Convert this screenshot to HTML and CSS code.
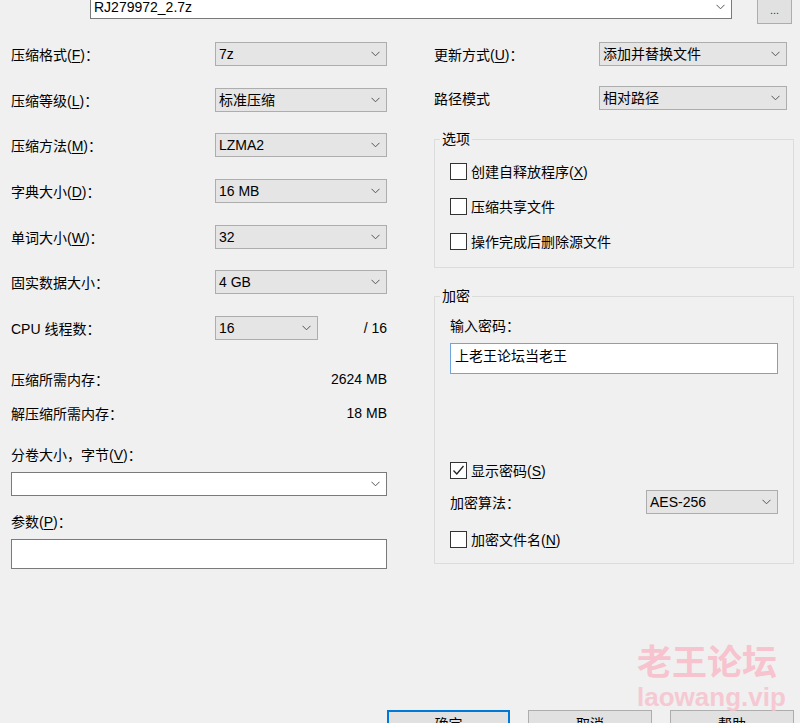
FILE: index.html
```html
<!DOCTYPE html>
<html lang="zh-CN">
<head>
<meta charset="utf-8">
<title>添加到压缩包</title>
<link rel="stylesheet" href="styles.css">
</head>
<body>
<div class="dialog">
  <div class="archive-row">
    <div class="combo combo-edit archive"><span class="combo-text">RJ279972_2.7z</span><svg class="chev" width="9" height="6" viewBox="0 0 9 6"><polyline points="0.5,0.8 4.5,4.8 8.5,0.8" fill="none" stroke="#555" stroke-width="1"/></svg></div>
    <button class="btn browse">...</button>
  </div>

  <div class="main">
    <div class="left">
      <div class="rows">
        <div class="field"><span class="label">压缩格式(<u>F</u>)：</span><div class="combo w172"><span class="combo-text">7z</span><svg class="chev" width="9" height="6" viewBox="0 0 9 6"><polyline points="0.5,0.8 4.5,4.8 8.5,0.8" fill="none" stroke="#555" stroke-width="1"/></svg></div></div>
        <div class="field"><span class="label">压缩等级(<u>L</u>)：</span><div class="combo w172"><span class="combo-text">标准压缩</span><svg class="chev" width="9" height="6" viewBox="0 0 9 6"><polyline points="0.5,0.8 4.5,4.8 8.5,0.8" fill="none" stroke="#555" stroke-width="1"/></svg></div></div>
        <div class="field"><span class="label">压缩方法(<u>M</u>)：</span><div class="combo w172"><span class="combo-text">LZMA2</span><svg class="chev" width="9" height="6" viewBox="0 0 9 6"><polyline points="0.5,0.8 4.5,4.8 8.5,0.8" fill="none" stroke="#555" stroke-width="1"/></svg></div></div>
        <div class="field"><span class="label">字典大小(<u>D</u>)：</span><div class="combo w172"><span class="combo-text">16 MB</span><svg class="chev" width="9" height="6" viewBox="0 0 9 6"><polyline points="0.5,0.8 4.5,4.8 8.5,0.8" fill="none" stroke="#555" stroke-width="1"/></svg></div></div>
        <div class="field"><span class="label">单词大小(<u>W</u>)：</span><div class="combo w172"><span class="combo-text">32</span><svg class="chev" width="9" height="6" viewBox="0 0 9 6"><polyline points="0.5,0.8 4.5,4.8 8.5,0.8" fill="none" stroke="#555" stroke-width="1"/></svg></div></div>
        <div class="field"><span class="label">固实数据大小：</span><div class="combo w172"><span class="combo-text">4 GB</span><svg class="chev" width="9" height="6" viewBox="0 0 9 6"><polyline points="0.5,0.8 4.5,4.8 8.5,0.8" fill="none" stroke="#555" stroke-width="1"/></svg></div></div>
        <div class="field"><span class="label">CPU 线程数：</span><div class="combo w103"><span class="combo-text">16</span><svg class="chev" width="9" height="6" viewBox="0 0 9 6"><polyline points="0.5,0.8 4.5,4.8 8.5,0.8" fill="none" stroke="#555" stroke-width="1"/></svg></div><span class="value">/ 16</span></div>
      </div>
      <div class="mem">
        <div class="field"><span class="label">压缩所需内存：</span><span class="value">2624 MB</span></div>
        <div class="field"><span class="label">解压缩所需内存：</span><span class="value">18 MB</span></div>
      </div>
      <div class="stack">
        <div class="line">分卷大小，字节(<u>V</u>)：</div>
        <div class="combo combo-edit full"><span class="combo-text"></span><svg class="chev" width="9" height="6" viewBox="0 0 9 6"><polyline points="0.5,0.8 4.5,4.8 8.5,0.8" fill="none" stroke="#555" stroke-width="1"/></svg></div>
        <div class="line params-label">参数(<u>P</u>)：</div>
        <div class="textbox params"></div>
      </div>
    </div>

    <div class="right">
      <div class="rows right-rows">
        <div class="field"><span class="label rlabel">更新方式(<u>U</u>)：</span><div class="combo w188"><span class="combo-text">添加并替换文件</span><svg class="chev" width="9" height="6" viewBox="0 0 9 6"><polyline points="0.5,0.8 4.5,4.8 8.5,0.8" fill="none" stroke="#555" stroke-width="1"/></svg></div></div>
        <div class="field"><span class="label rlabel">路径模式</span><div class="combo w188"><span class="combo-text">相对路径</span><svg class="chev" width="9" height="6" viewBox="0 0 9 6"><polyline points="0.5,0.8 4.5,4.8 8.5,0.8" fill="none" stroke="#555" stroke-width="1"/></svg></div></div>
      </div>

      <fieldset class="group options">
        <legend>选项</legend>
        <label class="check"><span class="box"></span><span>创建自释放程序(<u>X</u>)</span></label>
        <label class="check"><span class="box"></span><span>压缩共享文件</span></label>
        <label class="check"><span class="box"></span><span>操作完成后删除源文件</span></label>
      </fieldset>

      <fieldset class="group encrypt">
        <legend>加密</legend>
        <div class="line">输入密码：</div>
        <div class="textbox password">上老王论坛当老王</div>
        <label class="check show-pw"><span class="box"><svg width="15" height="15" viewBox="0 0 15 15"><polyline points="2.5,7.5 5.8,11 12.5,3" fill="none" stroke="#222" stroke-width="1.3"/></svg></span><span>显示密码(<u>S</u>)</span></label>
        <div class="field algo"><span class="label">加密算法：</span><div class="combo w133"><span class="combo-text">AES-256</span><svg class="chev" width="9" height="6" viewBox="0 0 9 6"><polyline points="0.5,0.8 4.5,4.8 8.5,0.8" fill="none" stroke="#555" stroke-width="1"/></svg></div></div>
        <label class="check enc-names"><span class="box"></span><span>加密文件名(<u>N</u>)</span></label>
      </fieldset>
    </div>
  </div>

  <div class="buttons">
    <button class="btn action default">确定</button>
    <button class="btn action">取消</button>
    <button class="btn action">帮助</button>
  </div>

  <div class="watermark">
    <div class="wm-cn">老王论坛</div>
    <div class="wm-en">laowang.vip</div>
  </div>
</div>
</body>
</html>
```

FILE: styles.css
```css
html, body {
  margin: 0;
  padding: 0;
}
body {
  width: 800px;
  height: 723px;
  overflow: hidden;
  background: #f0f0f0;
  font-family: "Liberation Sans", "Noto Sans CJK SC", sans-serif;
  font-size: 14px;
  color: #000;
}
.dialog {
  position: relative;
  width: 800px;
  height: 723px;
}
u {
  text-decoration: underline;
  text-underline-offset: 2px;
}

/* combos */
.combo {
  box-sizing: border-box;
  height: 24px;
  display: flex;
  align-items: center;
  background: #e5e5e5;
  border: 1px solid #adadad;
  padding: 0 6px 0 3px;
}
.combo-text {
  flex: 1;
  white-space: nowrap;
  line-height: 20px;
}
.chev {
  flex: none;
}
.combo-edit {
  background: #fff;
  border-color: #7a7a7a;
}
.w172 { width: 172px; }
.w103 { width: 103px; }
.w188 { width: 188px; }
.w133 { width: 133px; }

.textbox {
  box-sizing: border-box;
  background: #fff;
  border: 1px solid #7a7a7a;
}

/* top row */
.archive-row {
  display: flex;
  align-items: flex-start;
  margin-top: -6px;
  padding-left: 90px;
  gap: 25px;
}
.archive {
  width: 642px;
  margin-top: 1px;
}
.btn {
  box-sizing: border-box;
  font-family: inherit;
  font-size: 14px;
  color: #000;
  background: #e1e1e1;
  border: 1px solid #adadad;
  padding: 0;
  margin: 0;
}
.browse {
  width: 35px;
  height: 30px;
  font-size: 11px;
  line-height: 30px;
  color: #333;
}

/* main */
.main {
  display: grid;
  grid-template-columns: 376px 360px;
  column-gap: 47px;
  padding-left: 11px;
  padding-top: 18px;
}
.rows {
  display: flex;
  flex-direction: column;
  gap: 21.67px;
}
.field {
  display: flex;
  align-items: center;
  height: 24px;
}
.label {
  width: 204px;
  flex: none;
  white-space: nowrap;
}
.value {
  flex: 1;
  text-align: right;
}
.mem {
  display: flex;
  flex-direction: column;
  gap: 10px;
  margin-top: 27px;
}
.stack {
  display: flex;
  flex-direction: column;
  margin-top: 18px;
}
.line {
  line-height: 24px;
  height: 24px;
  white-space: nowrap;
}
.full {
  width: 376px;
  margin-top: 5px;
}
.params-label {
  margin-top: 14px;
}
.params {
  width: 376px;
  height: 30px;
  margin-top: 5px;
}

/* right */
.right-rows {
  gap: 20px;
}
.rlabel {
  width: 165px;
}
.group {
  margin: 0;
  border: 1px solid #dcdcdc;
  padding: 0 15px 0 15px;
  min-width: 0;
}
.group legend {
  padding: 0 2px;
  margin-left: -10px;
  line-height: 20px;
  font-size: 14px;
}
.options {
  margin-top: 19px;
  padding-top: 10px;
  padding-bottom: 14px;
  display: flex;
  flex-direction: column;
  gap: 11px;
}
.check {
  display: flex;
  align-items: center;
  height: 24px;
  gap: 4px;
  white-space: nowrap;
}
.box {
  box-sizing: border-box;
  width: 17px;
  height: 17px;
  border: 1px solid #333;
  background: #fff;
  flex: none;
  display: flex;
  align-items: center;
  justify-content: center;
}
.encrypt {
  margin-top: 18px;
  padding-top: 8px;
  padding-bottom: 12px;
}
.password {
  height: 31px;
  margin-top: 5px;
  border-color: #6ea5dc;
  padding: 0 4px;
  line-height: 25px;
}
.show-pw {
  margin-top: 84px;
}
.algo {
  margin-top: 8px;
}
.algo .label {
  width: 196px;
}
.enc-names {
  margin-top: 13px;
}

/* bottom buttons */
.buttons {
  display: flex;
  justify-content: flex-end;
  gap: 18px;
  padding-right: 6px;
  margin-top: 141px;
}
.action {
  width: 124px;
  height: 28px;
  line-height: 26px;
}
.default {
  border: 2px solid #0078d7;
  width: 123px;
  line-height: 24px;
}

/* watermark overlay */
.watermark {
  position: absolute;
  left: 637px;
  top: 646px;
  color: #f7c3ce;
  font-weight: bold;
  pointer-events: none;
}
.wm-cn {
  font-family: "Noto Sans CJK SC", sans-serif;
  font-size: 35px;
  line-height: 40px;
}
.wm-en {
  font-family: "Liberation Sans", sans-serif;
  font-size: 26px;
  line-height: 26px;
  margin-top: 4px;
  opacity: 0.85;
}
```
